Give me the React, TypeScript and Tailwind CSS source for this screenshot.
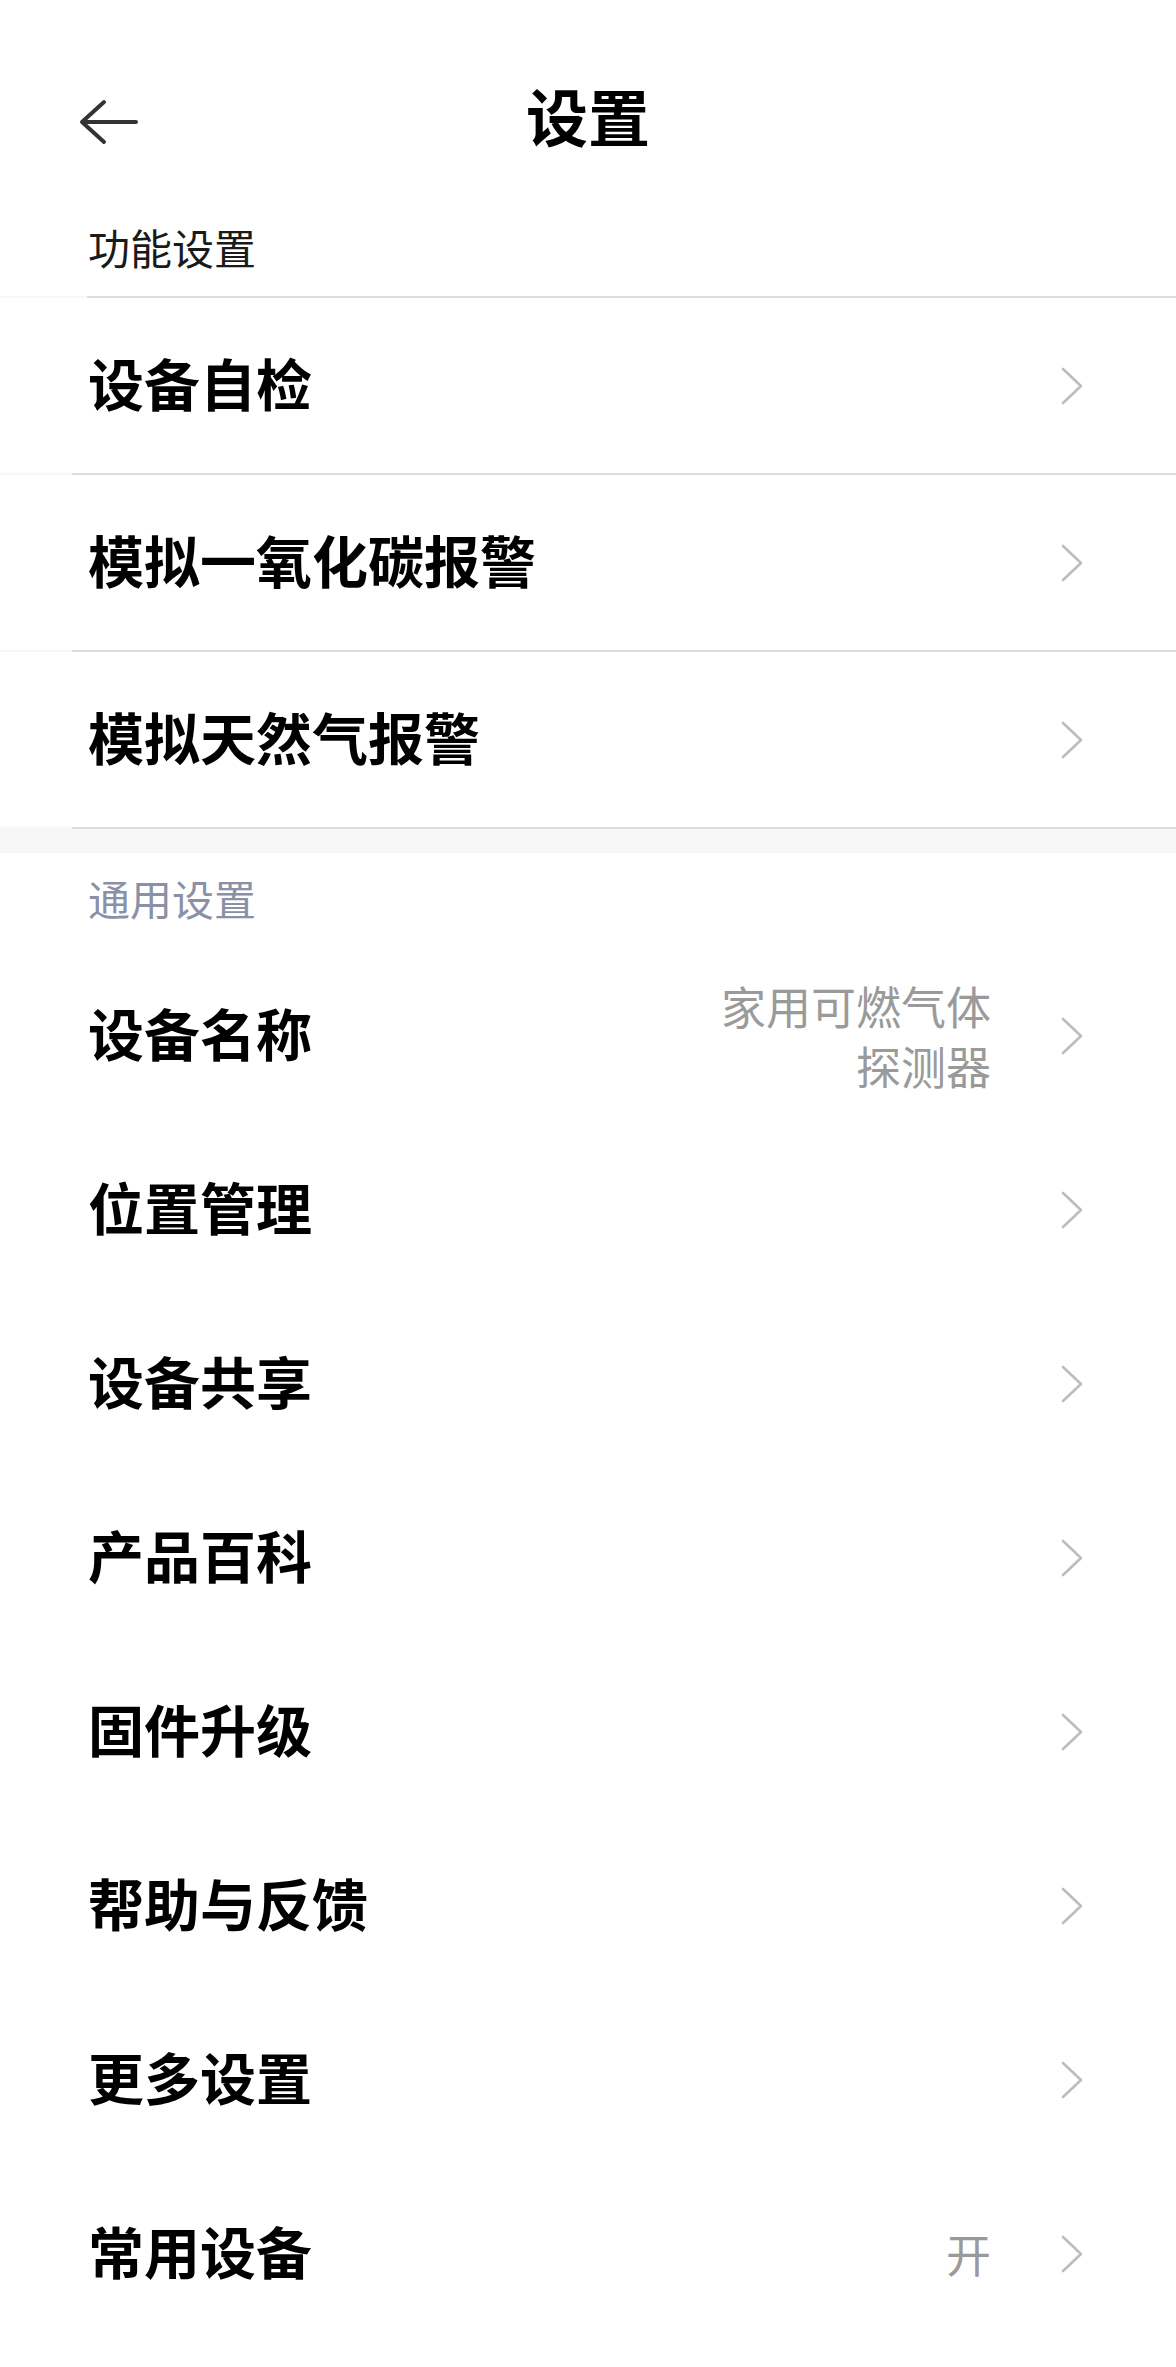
import React from "react";

const font = { fontFamily: '"Noto Sans CJK SC", "Noto Sans", sans-serif' };

type Item = { label: string; value?: string };

const featureItems: Item[] = [
  { label: "设备自检" },
  { label: "模拟一氧化碳报警" },
  { label: "模拟天然气报警" },
];

const generalItems: Item[] = [
  { label: "设备名称", value: "家用可燃气体探测器" },
  { label: "位置管理" },
  { label: "设备共享" },
  { label: "产品百科" },
  { label: "固件升级" },
  { label: "帮助与反馈" },
  { label: "更多设置" },
  { label: "常用设备", value: "开" },
];

function Chevron() {
  return (
    <svg width="22" height="38" viewBox="0 0 22 38" fill="none" className="shrink-0">
      <path
        d="M2 2 L20 19 L2 36"
        stroke="#bdbdbd"
        strokeWidth="2.6"
        strokeLinecap="round"
        strokeLinejoin="round"
      />
    </svg>
  );
}

function Divider({ inset }: { inset: string }) {
  return (
    <div className="flex h-[2px]">
      <div className={`${inset} bg-[#f8f8f8]`} />
      <div className="flex-1 bg-[#dcdcdc]" />
    </div>
  );
}

function Row({ item, height }: { item: Item; height: string }) {
  return (
    <div className={`flex items-center ${height} pl-[88px] pr-[93px]`}>
      <div className="mb-[8px] flex-1 text-[56px] font-semibold leading-none text-black">
        {item.label}
      </div>
      {item.value && (
        <div className="mr-[70px] max-w-[276px] text-right text-[45px] leading-[60px] text-[#9a9a9a]">
          {item.value}
        </div>
      )}
      <Chevron />
    </div>
  );
}

export default function App() {
  return (
    <div className="min-h-screen w-full bg-white" style={font}>
      {/* nav bar */}
      <div className="grid h-[184px] grid-cols-[1fr_auto_1fr] items-center pt-[60px]">
        <div className="pl-[79px]">
          <svg width="60" height="48" viewBox="0 0 60 48" fill="none">
            <path
              d="M25 4 L3 24 L25 44 M3 24 H57"
              stroke="#333333"
              strokeWidth="4"
              strokeLinecap="round"
              strokeLinejoin="round"
            />
          </svg>
        </div>
        <h1 className="mb-[14px] text-[62px] font-bold leading-none text-black">设置</h1>
        <div />
      </div>

      {/* 功能设置 */}
      <div className="flex h-[112px] items-center pb-[6px] pl-[88px] pt-[20px] text-[42px] leading-none text-[#1a1a1a]">
        功能设置
      </div>
      {featureItems.map((item, i) => (
        <div key={item.label}>
          <Divider inset={i === 0 ? "w-[87px]" : "w-[72px]"} />
          <Row item={item} height="h-[175px]" />
        </div>
      ))}
      <Divider inset="w-[72px]" />
      <div className="h-[24px] bg-[#f7f7f7]" />

      {/* 通用设置 */}
      <div className="flex h-[96px] items-center pb-[6px] pl-[88px] text-[42px] leading-none text-[#8a90a6]">
        通用设置
      </div>
      {generalItems.map((item) => (
        <Row key={item.label} item={item} height="h-[174px]" />
      ))}
    </div>
  );
}
